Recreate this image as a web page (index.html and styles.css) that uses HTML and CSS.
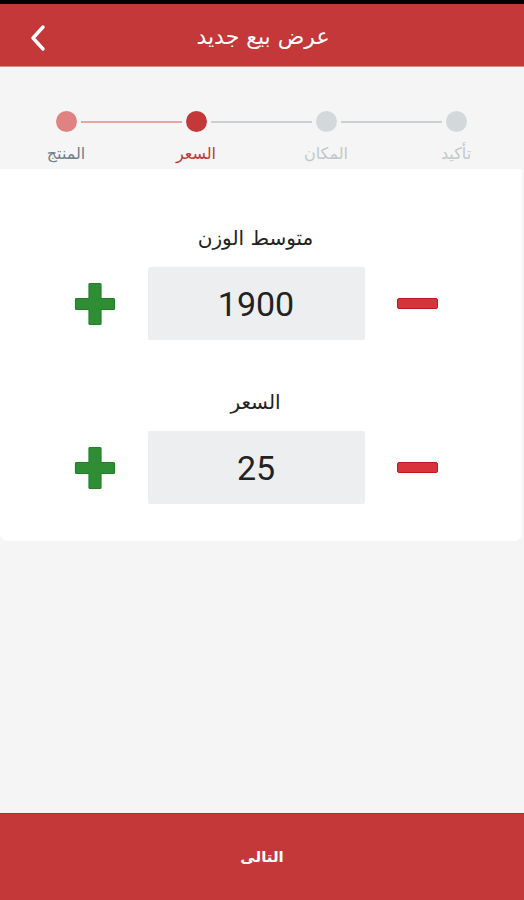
FILE: index.html
```html
<!DOCTYPE html>
<html lang="ar">
<head>
<meta charset="utf-8">
<link rel="stylesheet" href="styles.css">
</head>
<body>
<div class="screen">
  <div class="status"></div>
  <header class="appbar">
    <svg class="back" width="20" height="28" viewBox="0 0 20 28"><polyline points="15,3 5,14 15,25" fill="none" stroke="#fff" stroke-width="3.4" stroke-linecap="round" stroke-linejoin="round"/></svg>
    <h1 class="title">عرض بيع جديد</h1>
  </header>
  <div class="stepper">
    <div class="step done"><span class="dot"></span><span class="label">المنتج</span></div>
    <div class="step active"><span class="dot"></span><span class="label">السعر</span></div>
    <div class="step"><span class="dot"></span><span class="label">المكان</span></div>
    <div class="step last"><span class="dot"></span><span class="label">تأكيد</span></div>
  </div>
  <section class="card">
    <div class="field">
      <div class="field-label">متوسط الوزن</div>
      <div class="row">
        <svg class="plus" width="42" height="44" viewBox="0 0 42 44"><path d="M16 1.5h10a1 1 0 0 1 1 1V16.5h12.5a1 1 0 0 1 1 1v9a1 1 0 0 1-1 1H27V41.5a1 1 0 0 1-1 1H16a1 1 0 0 1-1-1V27.5H2.5a1 1 0 0 1-1-1v-9a1 1 0 0 1 1-1H15V2.5a1 1 0 0 1 1-1z" fill="#2f8e33" stroke="#23802a" stroke-width="1.2"/></svg>
        <div class="value">1900</div>
        <span class="minus"></span>
      </div>
    </div>
    <div class="field second">
      <div class="field-label">السعر</div>
      <div class="row">
        <svg class="plus" width="42" height="44" viewBox="0 0 42 44"><path d="M16 1.5h10a1 1 0 0 1 1 1V16.5h12.5a1 1 0 0 1 1 1v9a1 1 0 0 1-1 1H27V41.5a1 1 0 0 1-1 1H16a1 1 0 0 1-1-1V27.5H2.5a1 1 0 0 1-1-1v-9a1 1 0 0 1 1-1H15V2.5a1 1 0 0 1 1-1z" fill="#2f8e33" stroke="#23802a" stroke-width="1.2"/></svg>
        <div class="value">25</div>
        <span class="minus"></span>
      </div>
    </div>
  </section>
  <div class="spacer"></div>
  <footer class="next">التالى</footer>
</div>
</body>
</html>
```
FILE: styles.css
```css
* { box-sizing: border-box; margin: 0; padding: 0; }
html, body { width: 524px; height: 900px; overflow: hidden; }
body { background: #f5f5f5; font-family: "DejaVu Sans", "Noto Sans", sans-serif; }
.screen { display: flex; flex-direction: column; height: 900px; }
.status { height: 4px; background: #000; flex: none; }
.appbar {
  height: 63px; flex: none; background: #c4383a; position: relative;
  display: flex; align-items: center; justify-content: center;
  border-bottom: 1px solid #d98a8a; padding-top: 3px;
}
.back { position: absolute; left: 28px; top: 20px; }
.title { color: #fff; font-size: 22px; line-height: 30px; font-weight: normal; margin-left: 2px; }
.stepper {
  display: grid; grid-template-columns: repeat(4, 130px);
  padding: 44px 0 0 1px; height: 102px; flex: none;
}
.step { display: flex; flex-direction: column; align-items: center; position: relative; }
.step::after {
  content: ""; position: absolute; top: 10px; left: 80px; width: 101px; height: 2px;
  background: #cbd0d2;
}
.step.done::after { background: #e9a3a3; }
.step.last::after { display: none; }
.dot { width: 21px; height: 21px; border-radius: 50%; background: #d3d9db; }
.done .dot { background: #e08282; }
.active .dot { background: #c4383a; }
.label { margin-top: 11px; font-size: 16px; line-height: 22px; color: #c2c8ca; }
.done .label { color: #6f8188; }
.active .label { color: #c4383a; }
.card {
  background: #fff; border-radius: 0 0 8px 8px; margin-right: 2px;
  padding: 54px 11px 37px 0; flex: none;
}
.field { display: flex; flex-direction: column; align-items: center; }
.field.second { margin-top: 47px; }
.field-label { font-size: 20px; line-height: 30px; color: #222; }
.row { display: flex; align-items: center; margin-top: 14px; }
.value {
  width: 217px; height: 73px; background: #eceef0; border-radius: 2px;
  display: flex; align-items: center; justify-content: center;
  font-family: Roboto, "Noto Sans", sans-serif; font-size: 34px; color: #222;
  margin: 0 32px 0 32px;
}
.plus { display: block; flex: none; }
.minus { width: 41px; height: 11px; background: #d8333a; border: 1px solid #bf1a20; border-radius: 2px; }
.spacer { flex: 1; }
.next {
  height: 87px; flex: none; background: #c4383a; color: #fff;
  display: flex; align-items: center; justify-content: center;
  font-size: 15px; font-weight: bold; border-top: 1px solid #b22a2c;
}
```
